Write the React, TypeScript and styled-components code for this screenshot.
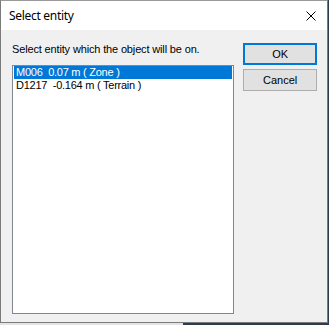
import styled, { createGlobalStyle } from "styled-components";

const GlobalStyle = createGlobalStyle`
  html, body {
    margin: 0;
    padding: 0;
    background: #2c3d50;
  }
  * {
    box-sizing: border-box;
  }
`;

const Screen = styled.div`
  width: 329px;
  height: 325px;
  display: flex;
  flex-direction: column;
  background: #2c3d50;
`;

const Window = styled.div`
  width: 328px;
  height: 323px;
  display: flex;
  flex-direction: column;
  border: 1px solid #7b7b7b;
  border-top-color: #9a9a9a;
  background: #f0f0f0;
`;

const TitleBar = styled.div`
  height: 29px;
  flex: none;
  display: flex;
  align-items: center;
  justify-content: space-between;
  padding: 0 9px 0 8px;
  background: #ffffff;
  font-family: "Segoe UI", "Noto Sans", sans-serif;
  font-size: 12px;
  letter-spacing: -0.3px;
  color: #000000;
`;

const Title = styled.span`
  padding-bottom: 1px;
`;

const CloseButton = styled.div`
  width: 12px;
  height: 12px;
  display: flex;
  align-items: center;
  justify-content: center;
  margin-right: 1px;
`;

const Body = styled.div`
  flex: 1;
  display: flex;
  gap: 9px;
  padding: 13px 10px 8px 11px;
  font-family: "Liberation Sans", Arial, sans-serif;
  font-size: 11px;
  color: #000000;
`;

const LeftColumn = styled.div`
  display: flex;
  flex-direction: column;
  width: 223px;
`;

const Label = styled.div`
  height: 22px;
  line-height: 13px;
  letter-spacing: -0.15px;
`;

const ListBox = styled.div`
  height: 249px;
  border: 1px solid #82868f;
  background: #ffffff;
  padding: 0 1px;
`;

const ListRow = styled.div<{ $selected?: boolean }>`
  height: 13px;
  line-height: 13px;
  padding-left: 2px;
  white-space: pre;
  letter-spacing: -0.25px;
  background: ${(p) => (p.$selected ? "#0078d7" : "transparent")};
  color: ${(p) => (p.$selected ? "#ffffff" : "#000000")};
`;

const ButtonColumn = styled.div`
  display: flex;
  flex-direction: column;
  gap: 4px;
  width: 74px;
`;

const Button = styled.div<{ $default?: boolean }>`
  height: 22px;
  display: flex;
  align-items: center;
  justify-content: center;
  background: #e1e1e1;
  border: ${(p) => (p.$default ? "2px solid #0078d7" : "1px solid #adadad")};
  font-family: "Liberation Sans", Arial, sans-serif;
  font-size: 11px;
  color: #000000;
`;

const BottomStrip = styled.div`
  flex: 1;
  display: flex;
`;

const StripLight = styled.div`
  width: 183px;
  background: #e4e4e4;
`;

const items = ["M006  0.07 m ( Zone )", "D1217  -0.164 m ( Terrain )"];

export default function App() {
  return (
    <>
      <GlobalStyle />
      <Screen>
        <Window>
          <TitleBar>
            <Title>Select entity</Title>
            <CloseButton>
              <svg width="10" height="10" viewBox="0 0 10 10">
                <path d="M0.5 0.5 L9.5 9.5 M9.5 0.5 L0.5 9.5" stroke="#000" strokeWidth="1" />
              </svg>
            </CloseButton>
          </TitleBar>
          <Body>
            <LeftColumn>
              <Label>Select entity which the object will be on.</Label>
              <ListBox>
                {items.map((item, idx) => (
                  <ListRow key={idx} $selected={idx === 0}>
                    {item}
                  </ListRow>
                ))}
              </ListBox>
            </LeftColumn>
            <ButtonColumn>
              <Button $default>OK</Button>
              <Button>Cancel</Button>
            </ButtonColumn>
          </Body>
        </Window>
        <BottomStrip>
          <StripLight />
        </BottomStrip>
      </Screen>
    </>
  );
}
